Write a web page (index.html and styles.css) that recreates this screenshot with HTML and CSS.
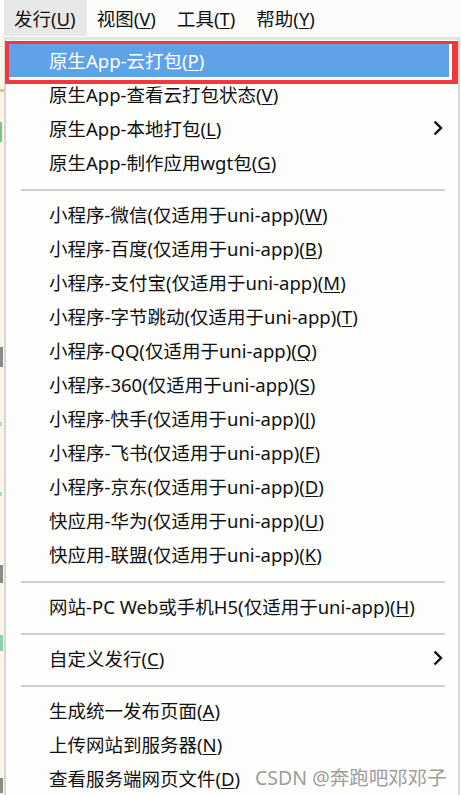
FILE: index.html
```html
<!DOCTYPE html>
<html lang="zh-CN">
<head>
<meta charset="utf-8">
<title>发行菜单</title>
<link rel="stylesheet" href="styles.css">
</head>
<body>
<div class="menubar">
  <div class="mb-item active">发行(<u>U</u>)</div>
  <div class="mb-item">视图(<u>V</u>)</div>
  <div class="mb-item">工具(<u>T</u>)</div>
  <div class="mb-item">帮助(<u>Y</u>)</div>
</div>
<div class="main">
  <div class="gutter"></div>
  <div class="dropdown">
    <div class="item selected"><span>原生App-云打包(<u>P</u>)</span></div>
    <div class="item"><span>原生App-查看云打包状态(<u>V</u>)</span></div>
    <div class="item"><span>原生App-本地打包(<u>L</u>)</span><svg class="chev" width="10" height="16" viewBox="0 0 10 16"><path d="M1.5 1.5 L8 8 L1.5 14.5" fill="none" stroke="#111" stroke-width="2.4"/></svg></div>
    <div class="item"><span>原生App-制作应用wgt包(<u>G</u>)</span></div>
    <div class="sep"></div>
    <div class="item"><span>小程序-微信(仅适用于uni-app)(<u>W</u>)</span></div>
    <div class="item"><span>小程序-百度(仅适用于uni-app)(<u>B</u>)</span></div>
    <div class="item"><span>小程序-支付宝(仅适用于uni-app)(<u>M</u>)</span></div>
    <div class="item"><span>小程序-字节跳动(仅适用于uni-app)(<u>T</u>)</span></div>
    <div class="item"><span>小程序-QQ(仅适用于uni-app)(<u>Q</u>)</span></div>
    <div class="item"><span>小程序-360(仅适用于uni-app)(<u>S</u>)</span></div>
    <div class="item"><span>小程序-快手(仅适用于uni-app)(<u>J</u>)</span></div>
    <div class="item"><span>小程序-飞书(仅适用于uni-app)(<u>F</u>)</span></div>
    <div class="item"><span>小程序-京东(仅适用于uni-app)(<u>D</u>)</span></div>
    <div class="item"><span>快应用-华为(仅适用于uni-app)(<u>U</u>)</span></div>
    <div class="item"><span>快应用-联盟(仅适用于uni-app)(<u>K</u>)</span></div>
    <div class="sep"></div>
    <div class="item"><span>网站-PC Web或手机H5(仅适用于uni-app)(<u>H</u>)</span></div>
    <div class="sep"></div>
    <div class="item"><span>自定义发行(<u>C</u>)</span><svg class="chev" width="10" height="16" viewBox="0 0 10 16"><path d="M1.5 1.5 L8 8 L1.5 14.5" fill="none" stroke="#111" stroke-width="2.4"/></svg></div>
    <div class="sep"></div>
    <div class="item"><span>生成统一发布页面(<u>A</u>)</span></div>
    <div class="item"><span>上传网站到服务器(<u>N</u>)</span></div>
    <div class="item"><span>查看服务端网页文件(<u>D</u>)</span></div>
  </div>
</div>
<div class="annot"></div>
<div class="watermark">CSDN @奔跑吧邓邓子</div>
</body>
</html>
```
FILE: styles.css
```css
html, body {
  margin: 0;
  padding: 0;
}
body {
  width: 461px;
  height: 795px;
  overflow: hidden;
  position: relative;
  background: #fcfcfa;
  font-family: "Noto Sans", "Noto Sans CJK SC", sans-serif;
  font-size: 18.5px;
  color: #111;
}
u {
  text-decoration-thickness: 1px;
  text-underline-offset: 2px;
}
.menubar {
  display: flex;
  height: 37px;
  padding-left: 4px;
  background: #fcfcfa;
}
.mb-item {
  height: 36px;
  display: flex;
  align-items: center;
  padding: 0 11px 0 10px;
  white-space: nowrap;
}
.mb-item.active {
  background: #e8e8e8;
}
.main {
  display: flex;
  height: 758px;
}
.gutter {
  width: 4px;
  flex: none;
  background-color: #fcf6e4;
  background-image:
    linear-gradient(#d8c8a2, #d8c8a2),
    linear-gradient(#7cc58a, #7cc58a),
    linear-gradient(#8a8a8a, #8a8a8a),
    linear-gradient(#9fd8e0, #9fd8e0),
    linear-gradient(#9fd8e0, #9fd8e0),
    linear-gradient(#8a8a8a, #8a8a8a),
    linear-gradient(#8fd0b0, #8fd0b0),
    linear-gradient(#8a8a8a, #8a8a8a);
  background-repeat: no-repeat;
  background-size: 4px 3px, 2px 20px, 3px 20px, 2px 4px, 2px 4px, 3px 18px, 3px 16px, 3px 15px;
  background-position: 0 52px, 0 85px, 0 310px, 0 385px, 0 455px, 0 528px, 0 598px, 0 741px;
}
.dropdown {
  flex: 1;
  margin-right: 1px;
  border-top: 3px solid #e4e4e4;
  border-left: 2px solid #d6d6d6;
  border-right: 2px solid #d9d9d9;
  background: #fdfdfb;
  padding-top: 3px;
}
.item {
  height: 34px;
  margin: 0 9px 0 3px;
  padding: 0 6px 0 40px;
  display: flex;
  align-items: center;
  justify-content: space-between;
  white-space: nowrap;
}
.item.selected {
  background: #5fa2e7;
  color: #fff;
}
.chev {
  flex: none;
  display: block;
}
.sep {
  height: 2px;
  background: #cfcfcf;
  margin: 10px 13px 6px 15px;
}
.annot {
  position: absolute;
  left: 5px;
  top: 41px;
  width: 453px;
  height: 43px;
  box-sizing: border-box;
  border: 3px solid #ee3a3c;
  border-left-width: 4px;
  border-right-width: 6px;
  border-bottom-width: 4px;
}
.watermark {
  position: absolute;
  left: 255px;
  top: 762px;
  font-size: 19.5px;
  color: #9c9c9c;
  white-space: nowrap;
  text-shadow: 0 0 1px #fff;
}
```
